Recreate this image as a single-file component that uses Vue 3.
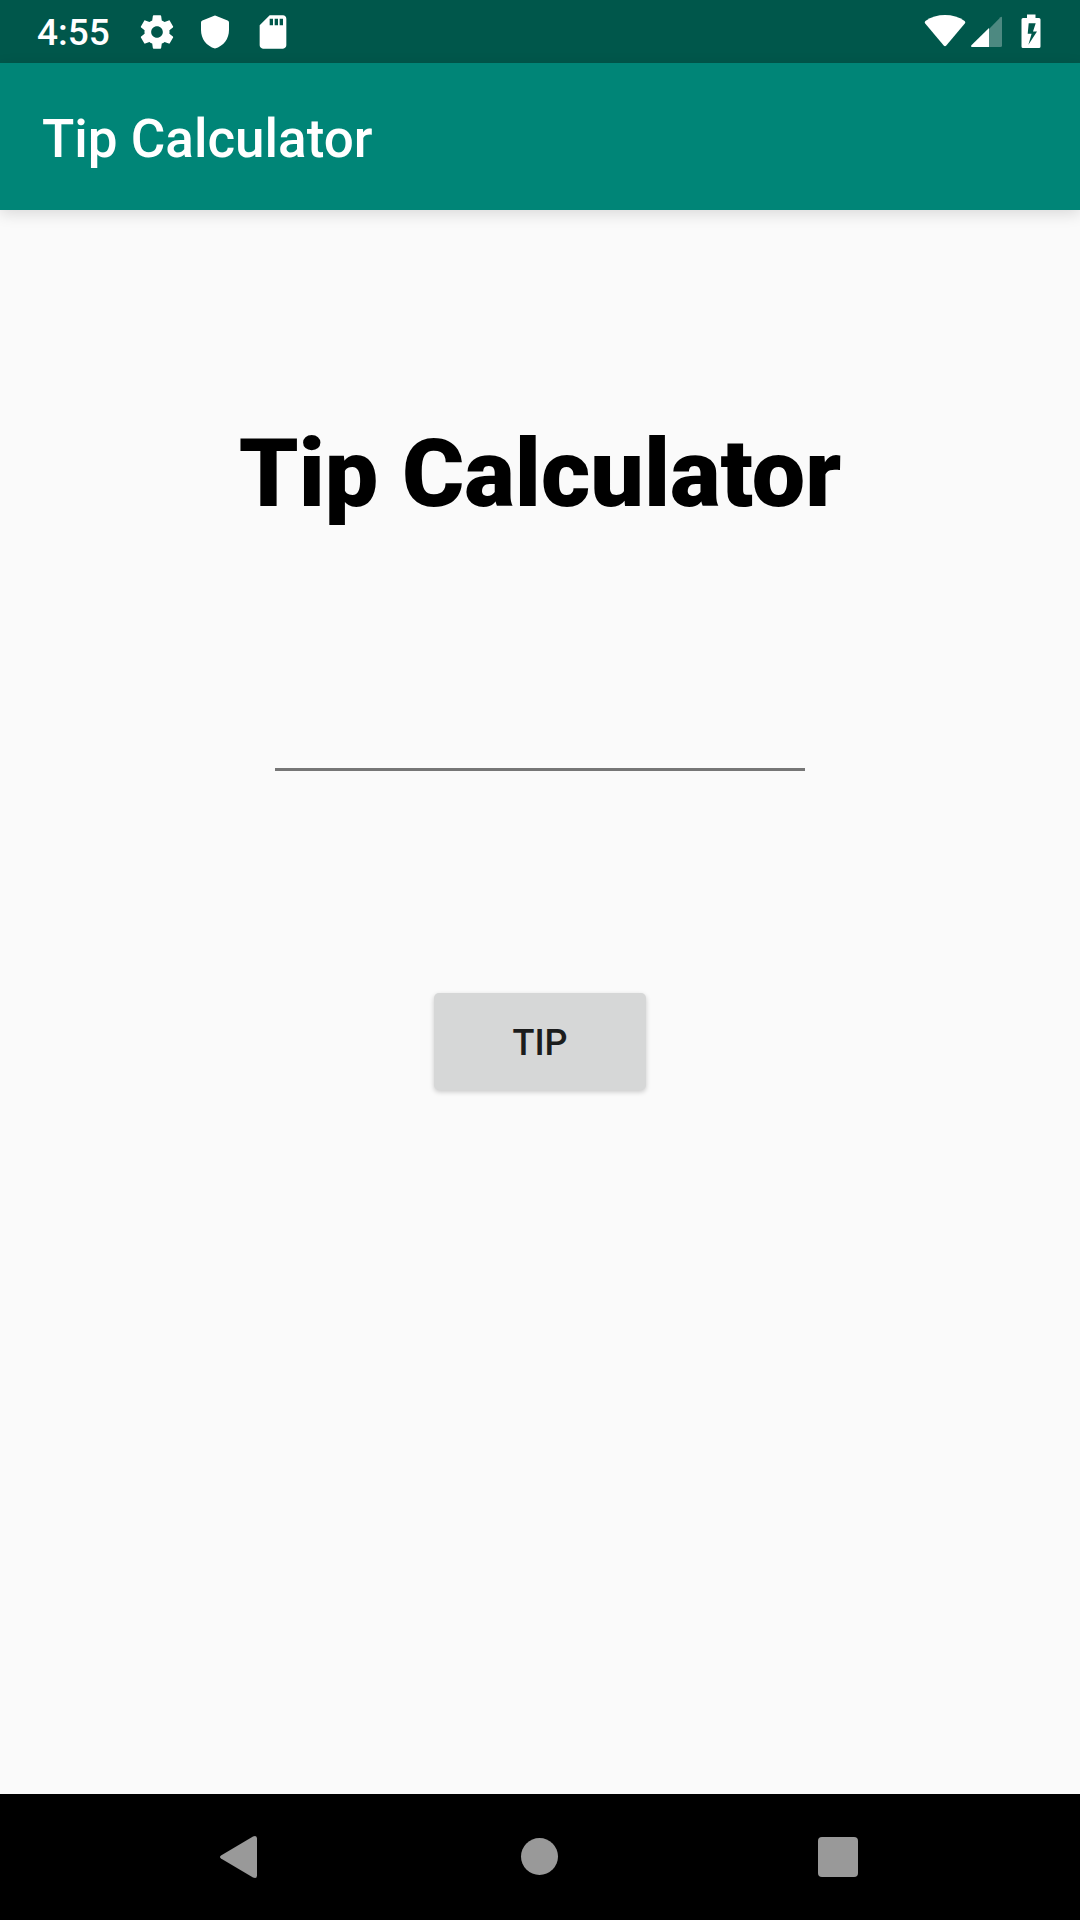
<script setup>
import { ref } from 'vue'

const amount = ref('')
</script>

<template>
  <div class="screen">
    <header class="status-bar">
      <time class="clock">4:55</time>
      <div class="notifications">
        <svg class="icon" viewBox="0 0 24 24" aria-hidden="true">
          <path d="M19.43 12.98c.04-.32.07-.64.07-.98s-.03-.66-.07-.98l2.11-1.65c.19-.15.24-.42.12-.64l-2-3.46c-.12-.22-.39-.3-.61-.22l-2.49 1c-.52-.4-1.08-.73-1.69-.98l-.38-2.65C14.46 2.18 14.25 2 14 2h-4c-.25 0-.46.18-.49.42l-.38 2.65c-.61.25-1.17.59-1.69.98l-2.49-1c-.23-.09-.49 0-.61.22l-2 3.46c-.13.22-.07.49.12.64l2.11 1.65c-.04.32-.07.65-.07.98s.03.66.07.98l-2.11 1.65c-.19.15-.24.42-.12.64l2 3.46c.12.22.39.3.61.22l2.49-1c.52.4 1.08.73 1.69.98l.38 2.65c.03.24.24.42.49.42h4c.25 0 .46-.18.49-.42l.38-2.65c.61-.25 1.17-.59 1.69-.98l2.49 1c.23.09.49 0 .61-.22l2-3.46c.12-.22.07-.49-.12-.64l-2.11-1.65zM12 15.5c-1.93 0-3.5-1.57-3.5-3.5s1.57-3.5 3.5-3.5 3.5 1.57 3.5 3.5-1.57 3.5-3.5 3.5z" />
        </svg>
        <svg class="icon" viewBox="0 0 40 40" aria-hidden="true">
          <path d="M19.2 3.8Q20 3.4 20.8 3.8L32.6 8.4Q34 9 34 10.4V18C34 27 28.5 34 20 36.6C11.500 34 6 27 6 18V10.400Q6 9 7.400 8.400Z" />
        </svg>
        <svg class="icon" viewBox="0 0 24 24" aria-hidden="true">
          <path d="M18 2h-8L4 8v12c0 1.100.9 2 2 2h12c1.100 0 2-.9 2-2V4c0-1.100-.9-2-2-2zm-6 6h-2V4h2v4zm3 0h-2V4h2v4zm3 0h-2V4h2v4z" />
        </svg>
      </div>
      <div class="system">
        <svg class="icon wifi" viewBox="0 0 42 40" aria-hidden="true">
          <path d="M1.200 11.500Q0 10 1.400 8.900C12.500 1 29.500 1 40.600 8.900Q42 10 40.800 11.500L22.300 33.500Q21 35 19.700 33.500Z" />
        </svg>
        <svg class="icon signal" viewBox="0 0 32 40" aria-hidden="true">
          <path class="faint" d="M18 17L29.500 5.200Q31 4 31 6V33.500Q31 35 29.500 35H18Z" />
          <path d="M18 16V35H1.500Q-.5 35 .4 33.200Z" />
        </svg>
        <svg class="icon battery" viewBox="0 0 20 40" aria-hidden="true">
          <path fill-rule="evenodd" d="M6 2.500H14.500V6H18Q19.500 6 19.500 7.500V34.500Q19.500 36 18 36H2Q.5 36 .5 34.500V7.500Q.5 6 2 6H6ZM7.700 11.200L6.700 21.800H10.600L7.400 32.800L16 19.500H12L14.700 11.200Z" />
        </svg>
      </div>
    </header>

    <div class="app-bar">Tip Calculator</div>

    <main class="content">
      <h1 class="heading">Tip Calculator</h1>
      <input v-model="amount" class="amount" type="text" inputmode="decimal" aria-label="Bill amount" />
      <button class="tip-button" type="button">TIP</button>
    </main>

    <nav class="nav-bar">
      <button class="nav-button" type="button" aria-label="Back">
        <svg class="nav-icon" viewBox="0 0 48 48" aria-hidden="true">
          <path d="M4 22.600L36 3.400Q40 1.800 40 5.500V42.500Q40 46.200 36 44.600L4 25.400Q2 24 4 22.600Z" />
        </svg>
      </button>
      <button class="nav-button" type="button" aria-label="Home">
        <svg class="nav-icon" viewBox="0 0 48 48" aria-hidden="true">
          <circle cx="23.500" cy="23.500" r="18.500" />
        </svg>
      </button>
      <button class="nav-button" type="button" aria-label="Recent apps">
        <svg class="nav-icon" viewBox="0 0 48 48" aria-hidden="true">
          <rect x="3" y="4" width="40" height="40" rx="4" />
        </svg>
      </button>
    </nav>
  </div>
</template>

<style>
body {
  margin: 0;
}
</style>

<style scoped>
.screen {
  display: flex;
  flex-direction: column;
  min-height: 100vh;
  background: #fafafa;
  font-family: Roboto, sans-serif;
}

.status-bar {
  display: flex;
  align-items: center;
  height: 63px;
  padding: 0 39px 0 37px;
  box-sizing: border-box;
  background: #00574b;
  color: #fff;
}

.clock {
  padding-top: 3px;
  font-size: 37px;
  font-weight: 500;
  line-height: 44px;
}

.notifications {
  display: flex;
  gap: 18px;
  margin-left: 27px;
}

.system {
  display: flex;
  margin-left: auto;
}

.icon {
  display: block;
  width: 40px;
  height: 40px;
  fill: currentColor;
}

.wifi {
  width: 42px;
}

.signal {
  width: 32px;
  margin: 0 18px 0 5px;
}

.battery {
  width: 20px;
}

.faint {
  opacity: 0.3;
}

.app-bar {
  display: flex;
  align-items: center;
  height: 147px;
  padding: 4px 42px 0;
  box-sizing: border-box;
  background: #008577;
  box-shadow: 0 4px 14px rgba(0, 0, 0, 0.13);
  color: #fff;
  font-size: 53px;
  font-weight: 500;
}

.content {
  display: flex;
  flex: 1;
  flex-direction: column;
  align-items: center;
  padding: 208px 42px 0;
}

.heading {
  margin: 0;
  color: #000;
  font-size: 95px;
  font-weight: 900;
  line-height: 112px;
}

.amount {
  width: 530px;
  max-width: 100%;
  height: 80px;
  margin-top: 161px;
  padding: 0;
  box-sizing: border-box;
  border: 0;
  border-bottom: 3px solid #767676;
  border-radius: 0;
  outline: 0;
  background: transparent;
  color: #212121;
  font: 400 47px Roboto, sans-serif;
}

.tip-button {
  width: 212px;
  height: 97px;
  margin-top: 222px;
  padding: 2px 0 0;
  border: 0;
  border-radius: 5px;
  background: #d6d7d7;
  box-shadow: 0 2px 5px rgba(0, 0, 0, 0.2);
  color: #1c1d1d;
  font: 500 36px Roboto, sans-serif;
}

.nav-bar {
  display: flex;
  justify-content: center;
  height: 126px;
  background: #000;
}

.nav-button {
  display: flex;
  align-items: center;
  justify-content: center;
  width: 299px;
  padding: 0;
  border: 0;
  background: transparent;
}

.nav-icon {
  width: 48px;
  height: 48px;
  fill: #999;
}
</style>
